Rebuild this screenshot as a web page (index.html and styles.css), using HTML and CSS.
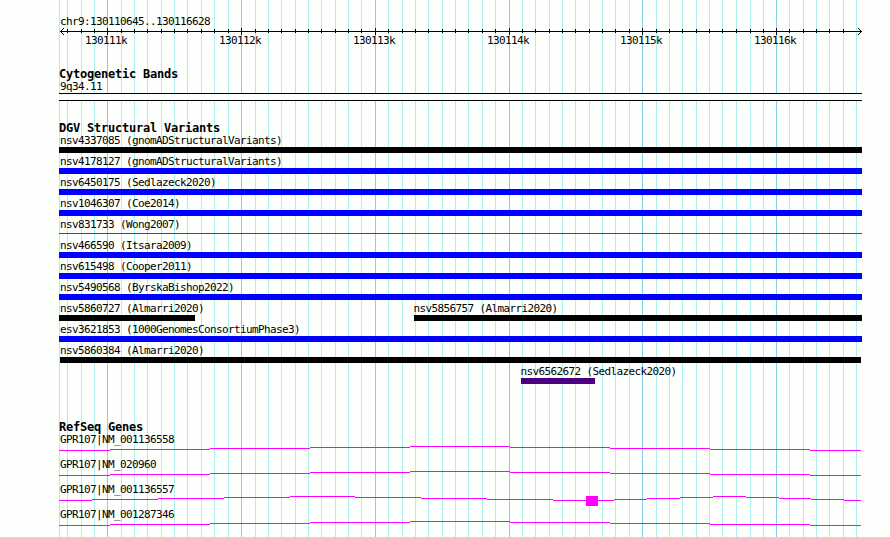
FILE: index.html
```
<!DOCTYPE html>
<html lang="en">
<head>
  <meta charset="UTF-8">
  <title>chr9:130110645..130116628</title>
  <link rel="stylesheet" href="styles.css">
</head>
<body>
  <div class="browser">
    <svg class="grid" width="890" height="537" shape-rendering="crispEdges">
      <path class="minor" id="gridMinor"/>
      <path class="major" id="gridMajor"/>
    </svg>

    <section class="ruler">
      <div class="label">chr9:130110645..130116628</div>
      <svg class="axis" width="803" height="20">
        <path class="line" id="axisTicks" shape-rendering="crispEdges"/>
        <path class="arrow" d="M5 1L1.5 4.5L5 8M799 1L802.5 4.5L799 8"/>
        <g id="axisLabels"></g>
      </svg>
    </section>

    <section class="track cytobands">
      <h2>Cytogenetic Bands</h2>
      <div class="label">9q34.11</div>
      <div class="band"></div>
    </section>

    <section class="track variants">
      <h2>DGV Structural Variants</h2>
      <div class="row"><div class="label">nsv4337085 (gnomADStructuralVariants)</div><div class="bar loss"></div></div>
      <div class="row"><div class="label">nsv4178127 (gnomADStructuralVariants)</div><div class="bar gain"></div></div>
      <div class="row"><div class="label">nsv6450175 (Sedlazeck2020)</div><div class="bar gain"></div></div>
      <div class="row"><div class="label">nsv1046307 (Coe2014)</div><div class="bar gain"></div></div>
      <div class="row"><div class="label">nsv831733 (Wong2007)</div><div class="bar thin"></div></div>
      <div class="row"><div class="label">nsv466590 (Itsara2009)</div><div class="bar gain"></div></div>
      <div class="row"><div class="label">nsv615498 (Cooper2011)</div><div class="bar gain"></div></div>
      <div class="row"><div class="label">nsv5490568 (ByrskaBishop2022)</div><div class="bar gain"></div></div>
      <div class="row split">
        <div class="feature" style="width:136px"><div class="label">nsv5860727 (Almarri2020)</div><div class="bar loss"></div></div>
        <div class="feature" style="width:448px"><div class="label flush">nsv5856757 (Almarri2020)</div><div class="bar loss"></div></div>
      </div>
      <div class="row"><div class="label">esv3621853 (1000GenomesConsortiumPhase3)</div><div class="bar gain"></div></div>
      <div class="row"><div class="label">nsv5860384 (Almarri2020)</div><div class="bar loss inset"></div></div>
      <div class="row last">
        <div class="feature" style="width:74px"><div class="label flush">nsv6562672 (Sedlazeck2020)</div><div class="bar complex"></div></div>
      </div>
    </section>

    <section class="track genes">
      <h2>RefSeq Genes</h2>
      <div class="gene">
        <div class="label">GPR107|NM_001136558</div>
        <svg class="intron" width="803" height="13"><path d="M0 4.5H51M51 3.5H151M151 2.5H251M251 1.5H351M351 .5H451M451 1.5H551M551 2.5H651M651 3.5H751M751 4.5H802"/></svg>
      </div>
      <div class="gene">
        <div class="label">GPR107|NM_020960</div>
        <svg class="intron" width="803" height="13"><path d="M0 4.5H51M51 3.5H151M151 2.5H251M251 1.5H351M351 .5H451M451 1.5H551M551 2.5H651M651 3.5H751M751 4.5H802"/></svg>
      </div>
      <div class="gene">
        <div class="label">GPR107|NM_001136557</div>
        <svg class="intron" width="803" height="13"><path d="M0 4.5H33M33 3.5H99M99 2.5H165M165 1.5H231M231 .5H296M296 1.5H362M362 2.5H428M428 3.5H494M494 4.5H555M555 3.5H588M588 2.5H621M621 1.5H654M654 .5H687M687 1.5H720M720 2.5H752M752 3.5H785M785 4.5H802"/><rect x="527" y="0" width="12" height="10"/></svg>
      </div>
      <div class="gene">
        <div class="label">GPR107|NM_001287346</div>
        <svg class="intron" width="803" height="13"><path d="M0 4.5H51M51 3.5H151M151 2.5H251M251 1.5H351M351 .5H451M451 1.5H551M551 2.5H651M651 3.5H751M751 4.5H802"/></svg>
      </div>
    </section>
  </div>

  <script>
    // gridline every 100 bp, darker one every 1000 bp
    const lines=[59,67,81,94,107,121,134,147,161,174,187,201,214,228,241,255,268,281,295,308,321,335,348,361,375,388,402,415,428,442,455,468,482,495,509,522,535,549,562,575,589,602,615,629,642,656,669,682,696,709,722,736,750,763,776,789,803,816,829,843,856];
    const left=59;
    const kilobases={107:'130111k',241:'130112k',375:'130113k',509:'130114k',642:'130115k',776:'130116k'};
    let minor='',major='',ticks='M1 4.5H803',labels='';
    lines.forEach(x=>{
      const seg=`M${x+.5} 0V537`,t=x-left+.5;
      if(kilobases[x]){
        major+=seg;
        ticks+=`M${t} 1V8`;
        labels+=`<text x="${x-left-22}" y="17">${kilobases[x]}</text>`;
      }else{
        minor+=seg;
        // no tick under the arrow heads
        if(x>left&&x<856)ticks+=`M${t} 2V6`;
      }
    });
    document.getElementById('gridMinor').setAttribute('d',minor);
    document.getElementById('gridMajor').setAttribute('d',major);
    document.getElementById('axisTicks').setAttribute('d',ticks);
    document.getElementById('axisLabels').innerHTML=labels;
  </script>
</body>
</html>
```

FILE: styles.css
```
html,body{margin:0;padding:0;overflow:hidden}
body{font-family:"DejaVu Sans Mono","Liberation Mono",monospace;font-size:11px;line-height:12px;letter-spacing:-.622px;color:#000}
.browser{position:relative;isolation:isolate;box-sizing:border-box;width:890px;height:537px;padding:16px 28px 0 59px;overflow:hidden;background:#fdfffd}
.grid{position:absolute;top:0;left:0;z-index:-1}
.grid path{fill:none;stroke-width:1}
.grid .minor{stroke:#afeeee}
.grid .major{stroke:#87ceeb}
svg{display:block}
h2{margin:0;font-size:12px;line-height:12px;font-weight:bold;letter-spacing:-.224px;white-space:nowrap}
.label{height:12px;padding-left:1px;white-space:nowrap}
.label.flush{padding-left:0;margin-left:-.5px}

.ruler{height:52px}
.axis{margin-top:-1px;overflow:visible}
.axis path{fill:none;stroke:#000;stroke-width:1}

.cytobands{height:54px}
.cytobands .label{margin-top:1px}
.band{box-sizing:border-box;width:803px;height:8px;border:solid #000;border-width:1px 0;background:#fdfffd}

.variants{height:299px}
.variants h2{height:13px}
.row{width:803px;height:21px}
.bar{height:6px}
.gain{background:#00f}
.loss{background:#000}
.complex{background:#4b0082}
.thin{height:1px;margin-top:2px;background:#f00}
.inset{margin:0 1px}
.split{display:flex;justify-content:space-between}
.last{box-sizing:border-box;padding-left:462px}

.genes h2{height:13px}
.gene{height:25px}
.intron path{fill:none;stroke:#f0f;shape-rendering:crispEdges}
.intron rect{fill:#f0f}
```
